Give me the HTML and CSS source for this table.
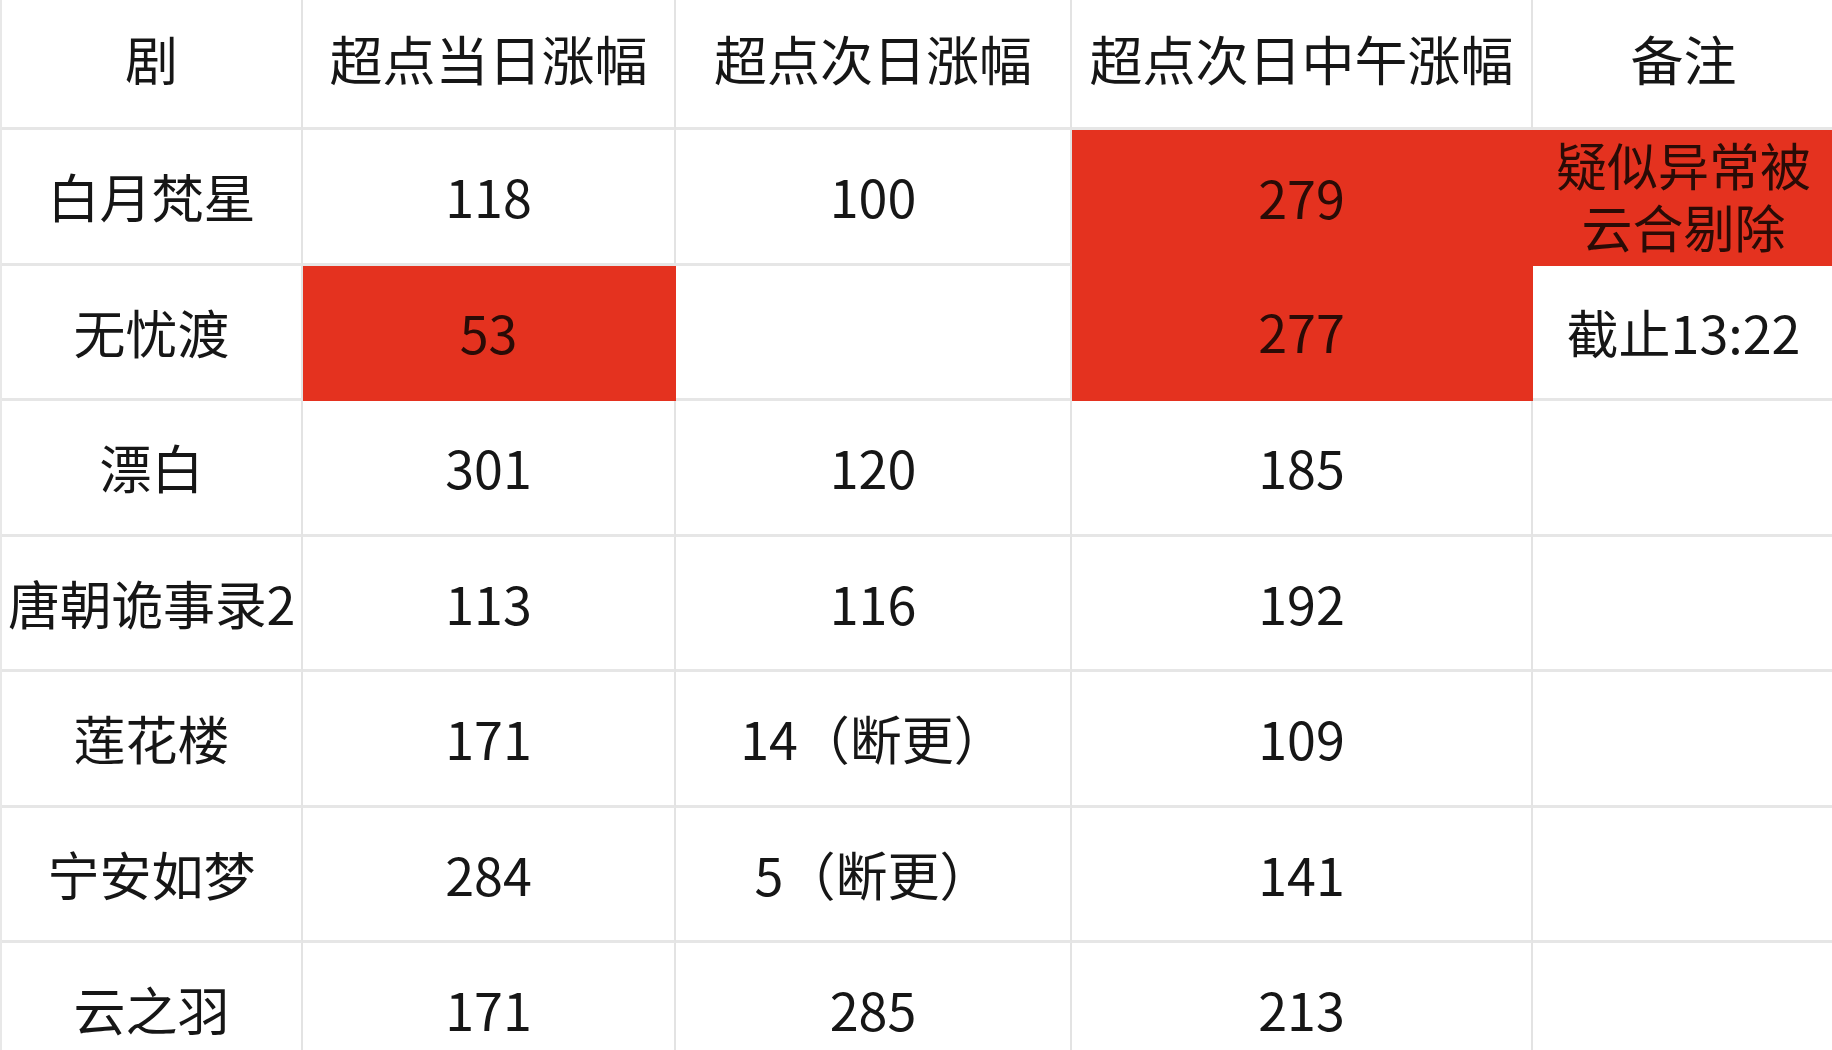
FILE: index.html
```html
<!DOCTYPE html>
<html lang="zh-CN">
<head>
<meta charset="utf-8">
<title>超点涨幅</title>
<link rel="stylesheet" href="styles.css">
</head>
<body>
<div class="sheet">
  <div class="cell head">剧</div>
  <div class="cell head">超点当日涨幅</div>
  <div class="cell head">超点次日涨幅</div>
  <div class="cell head">超点次日中午涨幅</div>
  <div class="cell head last">备注</div>

  <div class="cell">白月梵星</div>
  <div class="cell">118</div>
  <div class="cell">100</div>
  <div class="cell red tall">
    <div class="half">279</div>
    <div class="half">277</div>
  </div>
  <div class="cell red last note">
    <div class="note-line">疑似异常被</div>
    <div class="note-line">云合剔除</div>
  </div>

  <div class="cell">无忧渡</div>
  <div class="cell red">53</div>
  <div class="cell"></div>
  <div class="cell last">截止13:22</div>

  <div class="cell">漂白</div>
  <div class="cell">301</div>
  <div class="cell">120</div>
  <div class="cell">185</div>
  <div class="cell last"></div>

  <div class="cell narrow">唐朝诡事录2</div>
  <div class="cell">113</div>
  <div class="cell">116</div>
  <div class="cell">192</div>
  <div class="cell last"></div>

  <div class="cell">莲花楼</div>
  <div class="cell">171</div>
  <div class="cell">14（断更）</div>
  <div class="cell">109</div>
  <div class="cell last"></div>

  <div class="cell">宁安如梦</div>
  <div class="cell">284</div>
  <div class="cell">5（断更）</div>
  <div class="cell">141</div>
  <div class="cell last"></div>

  <div class="cell">云之羽</div>
  <div class="cell">171</div>
  <div class="cell">285</div>
  <div class="cell">213</div>
  <div class="cell last"></div>
</div>
</body>
</html>
```

FILE: styles.css
```css
html, body {
  margin: 0;
  padding: 0;
  background: #ffffff;
}

body {
  width: 1832px;
  height: 1050px;
  overflow: hidden;
  font-family: "Noto Sans CJK SC", "Noto Sans", sans-serif;
  color: #161616;
}

.sheet {
  display: grid;
  grid-template-columns: 301px 373px 396px 461px 301px;
  grid-template-rows: 130px repeat(7, 135.5px);
  border-left: 2px solid #e8e8e8;
}

.cell {
  box-sizing: border-box;
  display: flex;
  align-items: center;
  justify-content: center;
  text-align: center;
  font-size: 52px;
  line-height: 1.2;
  border-right: 2px solid #e3e3e3;
  border-bottom: 3px solid #e6e6e6;
  white-space: nowrap;
}

.cell.last {
  border-right: none;
}

.head {
  font-size: 53px;
  padding-bottom: 10px;
}

.narrow {
  font-size: 52px;
  letter-spacing: -0.3px;
}

.red {
  background: #e4321f;
  color: #2a0b06;
  border-color: #e4321f;
}

.tall {
  grid-row: span 2;
  display: grid;
  grid-template-rows: 1fr 1fr;
}

.half {
  display: flex;
  align-items: center;
  justify-content: center;
}

.note {
  flex-direction: column;
  font-size: 51px;
  padding-bottom: 2px;
}

.note-line {
  height: 62px;
  line-height: 62px;
}
```
